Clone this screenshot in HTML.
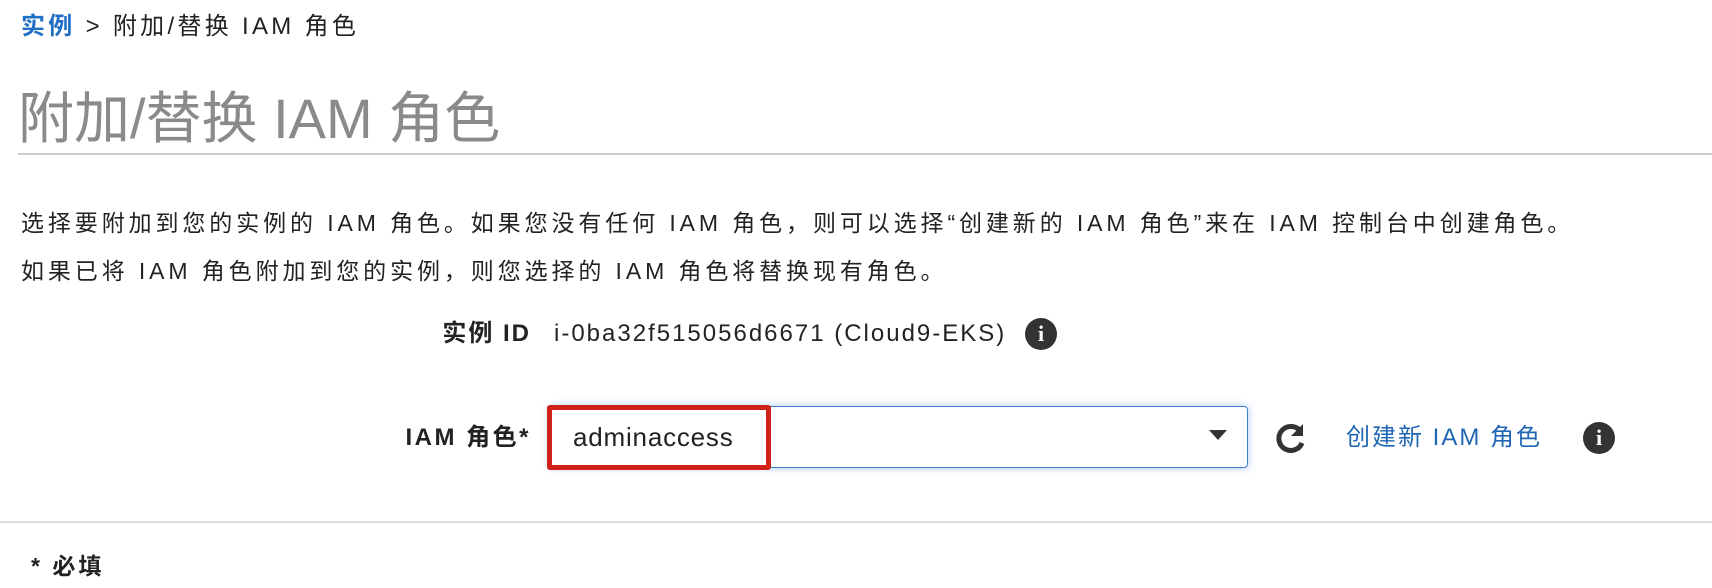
<!DOCTYPE html>
<html><head><meta charset="utf-8"><style>
body{margin:0;width:1712px;height:588px;background:#fff;font-family:"Liberation Sans","Noto Sans CJK SC",sans-serif;color:#222;position:relative;overflow:hidden}
.a{position:absolute;white-space:nowrap}
.info{position:absolute;width:32px;height:32px;border-radius:50%;background:#333;color:#fff;font:bold 22px "Liberation Serif",serif;text-align:center;line-height:32px}
</style></head><body>
<div class="a" style="left:21px;top:12px;font-size:24px;letter-spacing:3.3px;line-height:30px"><span style="color:#1f6fc5;font-weight:bold">实例</span> &gt; 附加/替换 IAM 角色</div>
<div class="a" style="left:18px;top:86px;font-size:56px;line-height:66px;color:#8a8a8a">附加/替换 IAM 角色</div>
<div class="a" style="left:18px;right:0;top:153px;height:2px;background:#ccc"></div>
<div class="a" style="left:21px;top:199px;font-size:23px;letter-spacing:3.9px;line-height:48px;color:#222">选择要附加到您的实例的 IAM 角色。如果您没有任何 IAM 角色，则可以选择“创建新的 IAM 角色”来在 IAM 控制台中创建角色。<br>如果已将 IAM 角色附加到您的实例，则您选择的 IAM 角色将替换现有角色。</div>
<div class="a" style="right:1181px;top:319px;font-size:24px;letter-spacing:2px;font-weight:bold;line-height:30px">实例 ID</div>
<div class="a" style="left:554px;top:319px;font-size:24px;letter-spacing:2px;line-height:30px">i-0ba32f515056d6671 (Cloud9-EKS)</div>
<div class="info" style="left:1025px;top:318px">i</div>
<div class="a" style="right:1181px;top:423px;font-size:24px;letter-spacing:2.5px;font-weight:bold;line-height:30px">IAM 角色*</div>
<div class="a" style="left:549px;top:406px;width:697px;height:60px;border:1.5px solid #3f7fcf;border-radius:4px;box-shadow:0 0 8px rgba(60,130,230,.45)"></div>
<div class="a" style="left:1209px;top:430px;width:0;height:0;border-left:9px solid transparent;border-right:9px solid transparent;border-top:10px solid #333"></div>
<div class="a" style="left:547px;top:405px;width:214px;height:55px;border:5px solid #d0211b;border-radius:3px;background:#fff"></div>
<div class="a" style="left:573px;top:421px;font-size:26px;letter-spacing:0.8px;line-height:32px;color:#222">adminaccess</div>
<svg class="a" style="left:1274px;top:421px" width="34" height="34" viewBox="0 0 34 34"><path d="M27 11 A12 12 0 1 0 28 22" fill="none" stroke="#333" stroke-width="5"/><path d="M29 3 L29 15 L17 15 Z" fill="#333"/></svg>
<div class="a" style="left:1346px;top:423px;font-size:24px;letter-spacing:2px;line-height:30px;color:#1f66b5">创建新 IAM 角色</div>
<div class="info" style="left:1583px;top:422px">i</div>
<div class="a" style="left:0;right:0;top:521px;height:2px;background:#ddd"></div>
<div class="a" style="left:31px;top:551px;font-size:23px;letter-spacing:3px;font-weight:bold;line-height:30px">* 必填</div>
</body></html>
